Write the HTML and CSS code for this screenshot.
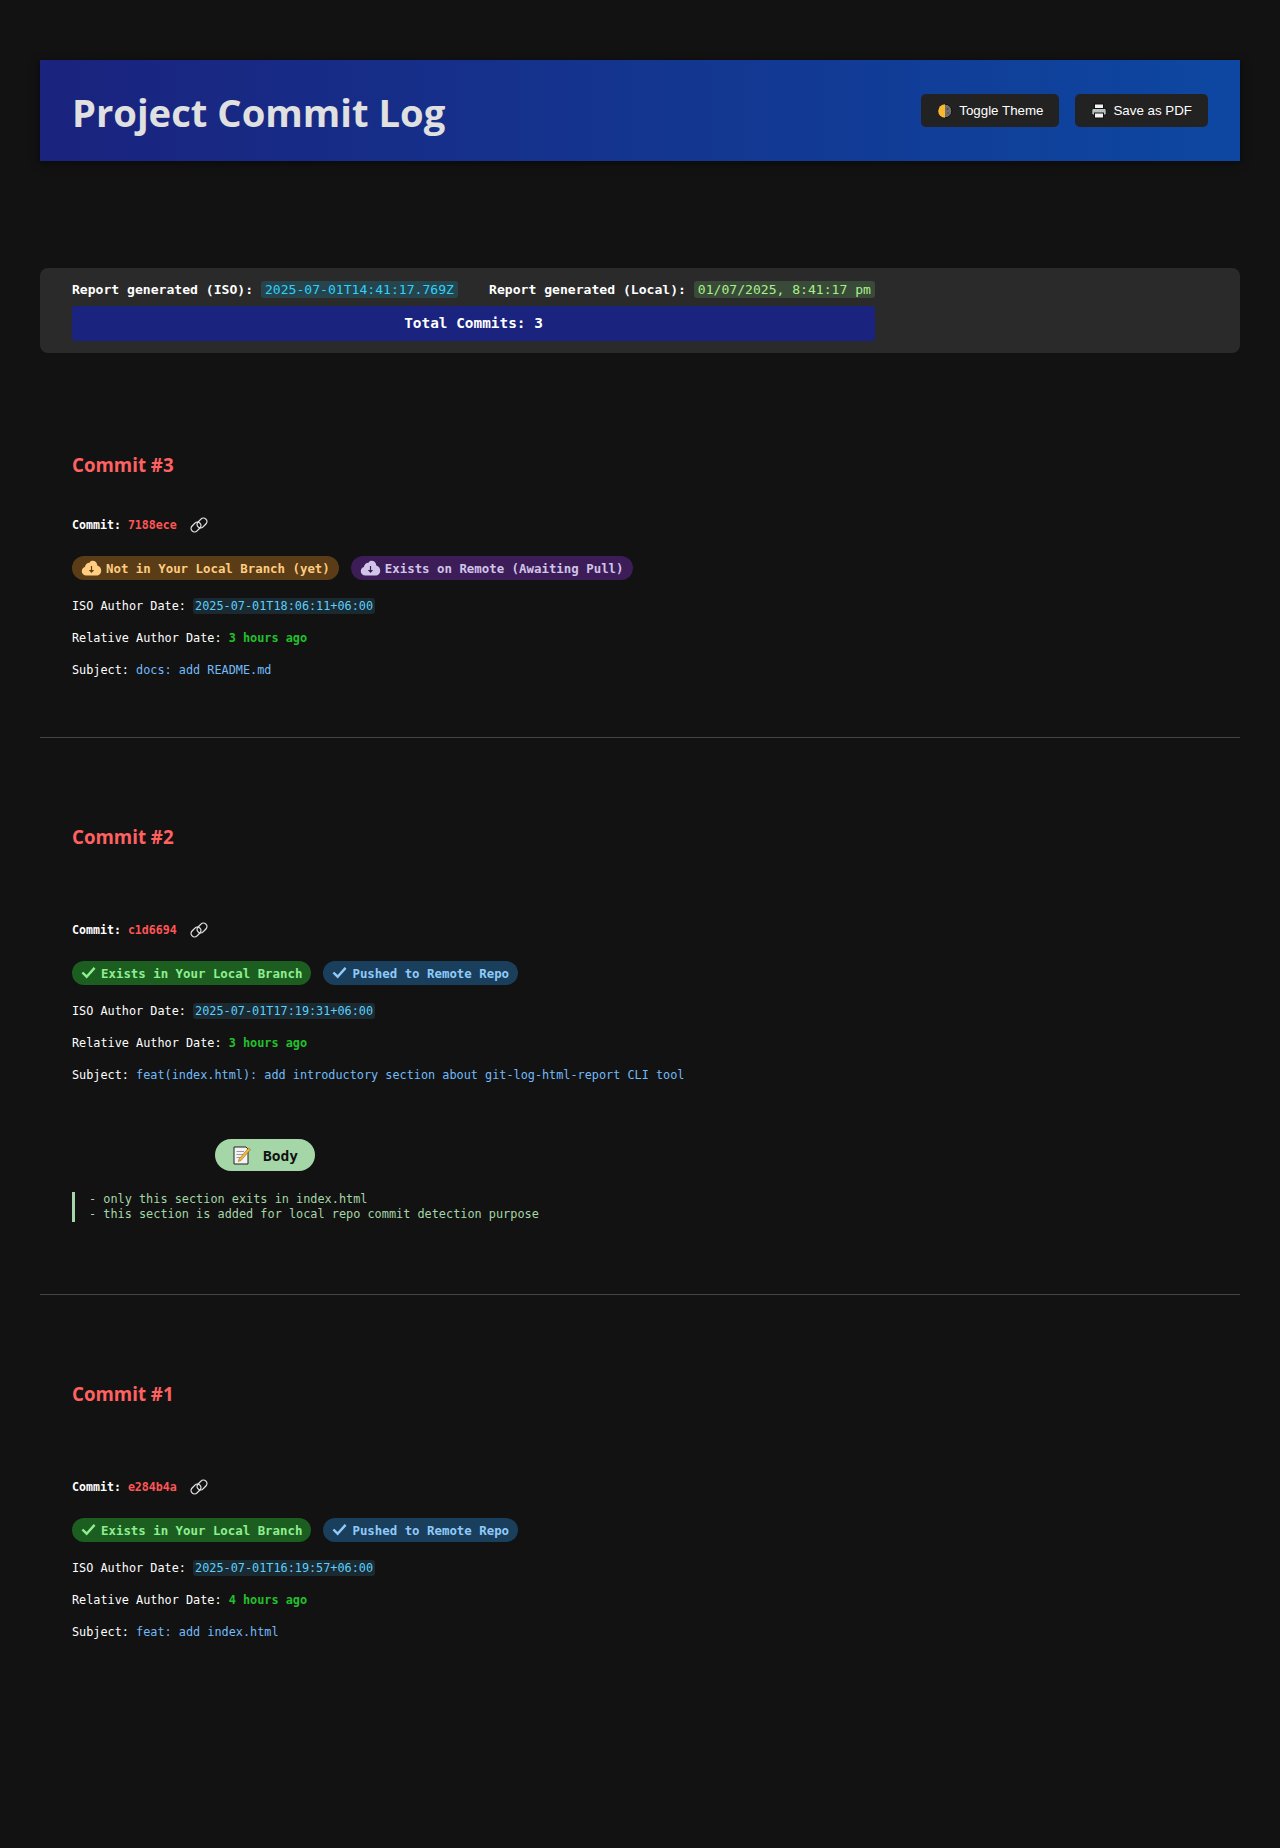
FILE: index.html
```html
<!DOCTYPE html>
<html lang="en">
<head>
  <meta charset="UTF-8" />
  <meta name="viewport" content="width=device-width, initial-scale=1.0"/>
  <title>Project Commit Log</title>
  <link rel="stylesheet" href="styles.css">
</head>
<body>

<svg class="defs" width="0" height="0" aria-hidden="true">
  <symbol id="i-check" viewBox="0 0 16 16">
    <path d="M1.5 8 L6 12.5 L14.5 3" fill="none" stroke="currentColor" stroke-width="2.6"/>
  </symbol>
  <symbol id="i-cloud" viewBox="0 0 20 16">
    <path fill-rule="evenodd" fill="currentColor" d="M5 15.5 C2.2 15.5 .3 13.6 .3 11.2 C.3 9.2 1.6 7.6 3.4 7.1 C3.6 4.6 5.6 2.7 8 2.7 C8.7 1.4 9.9 .8 11.2 .8 C13.7 .8 15.6 2.8 15.8 5.6 C18 6.2 19.7 8.2 19.7 10.7 C19.7 13.4 17.6 15.5 15 15.5 Z M9.4 6 V10 H7.3 L10 13 L12.7 10 H10.6 V6 Z"/>
  </symbol>
  <symbol id="i-link" viewBox="0 0 20 20">
    <g fill="none" stroke="currentColor" stroke-width="1.3">
      <rect x="1.5" y="8.5" width="11" height="7" rx="3.5" transform="rotate(-45 7 12)"/>
      <rect x="7.5" y="4.5" width="11" height="7" rx="3.5" transform="rotate(-45 13 8)"/>
    </g>
  </symbol>
</svg>

<header class="page-header">
  <h1>Project Commit Log</h1>
  <div class="header-actions">
    <button class="btn">
      <svg class="btn-icon" viewBox="0 0 16 16">
        <circle cx="8" cy="8" r="6.8" fill="#6e6e6e" stroke="#111" stroke-width="1"/>
        <path d="M8 1.2 A6.8 6.8 0 0 0 8 14.8 Z" fill="#fbb92e"/>
        <circle cx="10.5" cy="6" r="1" fill="#4c4c4c"/>
        <circle cx="11" cy="10" r=".8" fill="#4c4c4c"/>
      </svg>
      Toggle Theme
    </button>
    <button class="btn">
      <svg class="btn-icon" viewBox="0 0 16 16">
        <rect x="3.5" y="1" width="9" height="5" fill="#f2f2f2" stroke="#111" stroke-width="1"/>
        <rect x=".8" y="5.5" width="14.4" height="6.5" rx="1.5" fill="#b9c0c4" stroke="#111" stroke-width="1"/>
        <rect x="2.5" y="6.8" width="1.5" height="1" fill="#b6e08a"/>
        <rect x="3.5" y="10" width="9" height="5" fill="#f2f2f2" stroke="#111" stroke-width="1"/>
      </svg>
      Save as PDF
    </button>
  </div>
</header>

<section class="report-meta">
  <div class="report-inner">
    <div class="report-dates">
      <span>Report generated (ISO): <code class="iso">2025-07-01T14:41:17.769Z</code></span>
      <span>Report generated (Local): <code class="local">01/07/2025, 8:41:17 pm</code></span>
    </div>
    <div class="total">Total Commits: 3</div>
  </div>
</section>

<article class="commit commit-first">
  <h2>Commit #3</h2>
  <p class="hash-row">Commit: <span class="hash">7188ece</span><svg class="link-icon"><use href="#i-link"/></svg></p>
  <div class="badges">
    <span class="badge orange"><svg class="cloud"><use href="#i-cloud"/></svg>Not in Your Local Branch (yet)</span>
    <span class="badge purple"><svg class="cloud"><use href="#i-cloud"/></svg>Exists on Remote (Awaiting Pull)</span>
  </div>
  <p class="row">ISO Author Date: <code class="date">2025-07-01T18:06:11+06:00</code></p>
  <p class="row">Relative Author Date: <span class="rel">3 hours ago</span></p>
  <p class="row">Subject: <span class="subject">docs: add README.md</span></p>
</article>

<hr class="divider">

<article class="commit">
  <h2>Commit #2</h2>
  <p class="hash-row">Commit: <span class="hash">c1d6694</span><svg class="link-icon"><use href="#i-link"/></svg></p>
  <div class="badges">
    <span class="badge green"><svg class="check"><use href="#i-check"/></svg>Exists in Your Local Branch</span>
    <span class="badge blue"><svg class="check"><use href="#i-check"/></svg>Pushed to Remote Repo</span>
  </div>
  <p class="row">ISO Author Date: <code class="date">2025-07-01T17:19:31+06:00</code></p>
  <p class="row">Relative Author Date: <span class="rel">3 hours ago</span></p>
  <p class="row">Subject: <span class="subject">feat(index.html): add introductory section about git-log-html-report CLI tool</span></p>
  <div class="body-pill">
    <svg class="note" viewBox="0 0 20 20">
      <path d="M2 2 H14 L16 4 V19 H2 Z" fill="#f4f4f4" stroke="#222" stroke-width="1"/>
      <path d="M4.5 6.5 H12 M4.5 9.5 H11 M4.5 12.5 H9" stroke="#9a9a9a" stroke-width="1"/>
      <path d="M7 14 L16.5 3 L18.5 4.5 L9 15.5 L6.3 16.5 Z" fill="#f6b73c" stroke="#7a5a10" stroke-width=".5"/>
    </svg>
    Body
  </div>
  <pre class="body-text">- only this section exits in index.html
- this section is added for local repo commit detection purpose</pre>
</article>

<hr class="divider">

<article class="commit">
  <h2>Commit #1</h2>
  <p class="hash-row">Commit: <span class="hash">e284b4a</span><svg class="link-icon"><use href="#i-link"/></svg></p>
  <div class="badges">
    <span class="badge green"><svg class="check"><use href="#i-check"/></svg>Exists in Your Local Branch</span>
    <span class="badge blue"><svg class="check"><use href="#i-check"/></svg>Pushed to Remote Repo</span>
  </div>
  <p class="row">ISO Author Date: <code class="date">2025-07-01T16:19:57+06:00</code></p>
  <p class="row">Relative Author Date: <span class="rel">4 hours ago</span></p>
  <p class="row">Subject: <span class="subject">feat: add index.html</span></p>
</article>

</body>
</html>
```
FILE: styles.css
```css
:root {
  --bg: #121212;
  --mono: "DejaVu Sans Mono", "Liberation Mono", monospace;
  --sans: "Open Sans", "Noto Sans", sans-serif;
}

body {
  margin: 0;
  padding: 60px 40px 0;
  min-height: 1788px;
  background: var(--bg);
  color: #fff;
  font-family: var(--mono);
}

.defs {
  position: absolute;
}

/* header */
.page-header {
  display: flex;
  align-items: center;
  justify-content: space-between;
  height: 101px;
  padding: 0 32px;
  background: linear-gradient(90deg, #1a237e, #0d47a1);
  box-shadow: 0 2px 8px rgba(0, 0, 0, 0.5);
}

.page-header h1 {
  margin: 0;
  padding-top: 3px;
  font-family: var(--sans);
  font-size: 38.2px;
  font-weight: 700;
  color: #e0e0e0;
}

.header-actions {
  display: flex;
  gap: 16px;
}

.btn {
  display: flex;
  align-items: center;
  gap: 6px;
  height: 33px;
  padding: 0 16px;
  background: #222;
  color: #fff;
  border: none;
  border-radius: 5px;
  font-family: "Liberation Sans", sans-serif;
  font-size: 13.33px;
}

.btn-icon {
  width: 16px;
  height: 16px;
}

/* report summary */
.report-meta {
  margin-top: 107px;
  height: 85px;
  padding: 0 32px;
  background: #2a2a2a;
  border-radius: 8px;
  box-sizing: border-box;
}

.report-inner {
  width: 803px;
  padding-top: 12px;
}

.report-dates {
  display: flex;
  justify-content: space-between;
  font-size: 13.08px;
  line-height: 20px;
  font-weight: 700;
  color: #fff;
  white-space: nowrap;
}

.report-dates code {
  font-family: var(--mono);
  font-weight: 400;
  padding: 1px 4px;
  border-radius: 3px;
}

.iso {
  color: #2fd0ff;
  background: #25444c;
}

.local {
  color: #a8f08a;
  background: #3a4a38;
}

.total {
  margin-top: 6px;
  height: 35px;
  line-height: 35px;
  text-align: center;
  background: #1a237e;
  border-radius: 3px;
  font-size: 14.4px;
  font-weight: 700;
}

/* commits */
.commit {
  padding: 85px 32px 0;
}

.commit-first {
  padding-top: 98px;
  padding-bottom: 45px;
}

.commit h2 {
  margin: 0 0 70px;
  font-family: var(--sans);
  font-size: 18.7px;
  line-height: 27px;
  font-weight: 700;
  color: #ff6161;
}

.commit-first h2 {
  margin-bottom: 37px;
}

.hash-row {
  display: flex;
  align-items: center;
  gap: 7px;
  margin: 0;
  height: 20px;
  font-size: 11.6px;
  font-weight: 700;
}

.hash {
  color: #ff5555;
}

.link-icon {
  width: 20px;
  height: 20px;
  margin-left: 5px;
  color: #e4e4e4;
}

.badges {
  display: flex;
  gap: 12px;
  margin: 21px 0 16px;
}

.badge {
  display: flex;
  align-items: center;
  gap: 4px;
  height: 24px;
  padding: 0 9px;
  border-radius: 12px;
  font-size: 12.4px;
  font-weight: 700;
}

.cloud {
  width: 21px;
  height: 16px;
}

.check {
  width: 15px;
  height: 15px;
  margin-right: 1px;
  margin-top: -2px;
}

.orange { background: #5a3d17; color: #ffcc80; }
.purple { background: #3d1d58; color: #d1c4e9; }
.green  { background: #1b5e20; color: #90ee90; }
.blue   { background: #1a3f5c; color: #90caf9; }

.row {
  margin: 0 0 12px;
  font-size: 11.83px;
  line-height: 20px;
}

.date {
  font-family: var(--mono);
  color: #5ccfff;
  background: #1a2a30;
  padding: 1px 2px;
  border-radius: 3px;
}

.rel {
  color: #22c02c;
  font-weight: 700;
}

.subject {
  color: #72bbf8;
}

.body-pill {
  display: flex;
  align-items: center;
  justify-content: center;
  gap: 11px;
  box-sizing: border-box;
  width: 100px;
  height: 32px;
  margin: 54px 0 0 143px;
  background: #a5d6a7;
  border-radius: 16px;
  color: #111;
  font-size: 14.6px;
  font-weight: 700;
}

.note {
  width: 20px;
  height: 20px;
}

.body-text {
  margin: 21px 0 72px;
  padding-left: 14px;
  border-left: 3px solid #a5d6a7;
  color: #a5d6a7;
  font-family: var(--mono);
  font-size: 11.87px;
  line-height: 15px;
}

.divider {
  margin: 0;
  border: none;
  border-top: 1px solid #444;
}
```
